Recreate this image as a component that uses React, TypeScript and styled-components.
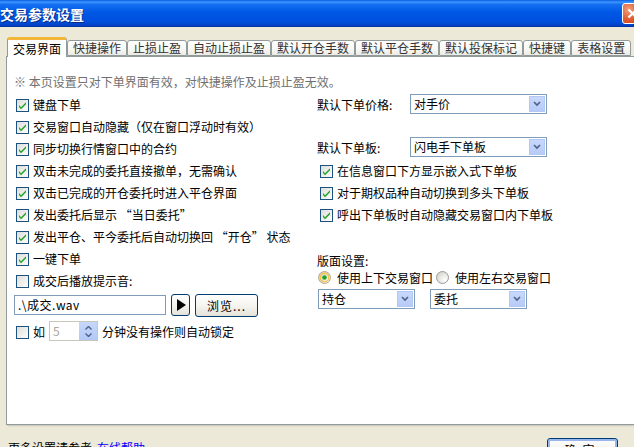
import styled, { createGlobalStyle } from "styled-components";

const GlobalStyle = createGlobalStyle`
  html, body {
    margin: 0;
    padding: 0;
    overflow: hidden;
    background: #ece9d8;
  }
  body {
    font-family: "Noto Sans CJK SC", "Liberation Sans", sans-serif;
    font-size: 12px;
    color: #000;
  }
`;

const Window = styled.div`
  width: 646px;
  height: 480px;
  background: #ece9d8;
  display: flex;
  flex-direction: column;
`;

const TitleBar = styled.div`
  height: 27px;
  flex: none;
  display: flex;
  align-items: center;
  justify-content: space-between;
  background: linear-gradient(
    to bottom,
    #0a5fe0 0%,
    #3d95ff 8%,
    #1470f0 16%,
    #0058e6 45%,
    #004fdd 80%,
    #0043c8 93%,
    #00309c 100%
  );
`;

const Title = styled.div`
  color: #fff;
  font-weight: bold;
  font-size: 14px;
  line-height: 16px;
  text-shadow: 1px 1px 0 #0b2a80;
`;

const CloseBtn = styled.div`
  width: 19px;
  height: 19px;
  margin-right: 3px;
  border: 1px solid #fff;
  border-radius: 3px;
  background: radial-gradient(circle at 30% 30%, #f0a080 0%, #e0582c 55%, #c8401c 100%);
  display: flex;
  align-items: center;
  justify-content: center;
`;

const Body = styled.div`
  padding-top: 10px;
  display: flex;
  flex-direction: column;
`;

const TabBar = styled.div`
  height: 19px;
  display: flex;
  align-items: flex-end;
  padding-left: 7px;
  position: relative;
  z-index: 1;
`;

const Tab = styled.div<{ $active?: boolean }>`
  box-sizing: border-box;
  height: ${(p) => (p.$active ? "20px" : "16px")};
  margin-bottom: ${(p) => (p.$active ? "-1px" : "0")};
  padding: 0 5px;
  display: flex;
  align-items: center;
  white-space: nowrap;
  color: ${(p) => (p.$active ? "#000" : "#333")};
  background: ${(p) =>
    p.$active ? "#fff" : "linear-gradient(to bottom, #ffffff 0%, #f7f7f4 60%, #eceae2 100%)"};
  border: 1px solid #919b9c;
  border-bottom: ${(p) => (p.$active ? "none" : "1px solid #919b9c")};
  border-top: ${(p) => (p.$active ? "3px solid #f4b638" : "1px solid #919b9c")};
  border-radius: 3px 3px 0 0;
  line-height: 14px;
`;

const Panel = styled.div`
  margin-left: 6px;
  width: 636px;
  height: 369px;
  box-sizing: border-box;
  background: #fff;
  border: 1px solid #919b9c;
  box-shadow: 1px 1px 0 #d0cdc0, 2px 2px 0 #e3e0d2;
  padding: 17px 0 0 7px;
`;

const Note = styled.div`
  height: 16px;
  line-height: 16px;
  color: #707070;
  margin-bottom: 3px;
`;

const Columns = styled.div`
  display: grid;
  grid-template-columns: 303px 1fr;
`;

const Column = styled.div`
  display: flex;
  flex-direction: column;
`;

const CheckRow = styled.label<{ $indent?: number }>`
  height: 22px;
  display: flex;
  align-items: center;
  gap: 4px;
  padding-left: ${(p) => p.$indent ?? 2}px;
  white-space: nowrap;
`;

const BoxWrap = styled.span`
  width: 13px;
  height: 13px;
  flex: none;
  display: block;
`;

function CheckBox({ checked }: { checked?: boolean }) {
  return (
    <BoxWrap>
      <svg width="13" height="13" viewBox="0 0 13 13">
        <defs>
          <linearGradient id="cbg" x1="0" y1="0" x2="1" y2="1">
            <stop offset="0" stopColor="#dcdcd7" />
            <stop offset="1" stopColor="#ffffff" />
          </linearGradient>
        </defs>
        <rect x="0.5" y="0.5" width="12" height="12" fill="url(#cbg)" stroke="#1c5180" />
        {checked && (
          <path d="M3 6 L5 8.2 L10 3.3 L10 5.3 L5 10.2 L3 8 Z" fill="#21a121" />
        )}
      </svg>
    </BoxWrap>
  );
}

const FieldRow = styled.div<{ $h?: number }>`
  height: ${(p) => p.$h ?? 22}px;
  display: flex;
  align-items: center;
  white-space: nowrap;
`;

const Label = styled.span<{ $w?: number }>`
  width: ${(p) => (p.$w ? `${p.$w}px` : "auto")};
  flex: none;
`;

const SelectBox = styled.div<{ $w: number }>`
  box-sizing: border-box;
  width: ${(p) => p.$w}px;
  height: 20px;
  border: 1px solid #7f9db9;
  background: #fff;
  display: flex;
  align-items: stretch;
`;

const SelectText = styled.span`
  flex: 1;
  padding-left: 3px;
  line-height: 18px;
`;

const DropBtn = styled.span`
  width: 16px;
  margin: 1px;
  background: linear-gradient(to bottom, #c8d8fc 0%, #b6cbf7 100%);
  border: 1px solid #b3c8f5;
  box-sizing: border-box;
  display: flex;
  align-items: center;
  justify-content: center;
`;

function Select({ w, value }: { w: number; value: string }) {
  return (
    <SelectBox $w={w}>
      <SelectText>{value}</SelectText>
      <DropBtn>
        <svg width="8" height="6" viewBox="0 0 8 6">
          <path d="M1 1 L4 4 L7 1" stroke="#4d6185" strokeWidth="1.6" fill="none" />
        </svg>
      </DropBtn>
    </SelectBox>
  );
}

const Spacer = styled.div<{ $h: number }>`
  height: ${(p) => p.$h}px;
  flex: none;
`;

const RadioRow = styled.div`
  height: 14px;
  display: flex;
  align-items: center;
  padding-left: 1px;
  white-space: nowrap;
`;

const RadioItem = styled.span`
  display: flex;
  align-items: center;
  gap: 6px;
  margin-right: 3px;
`;

function Radio({ checked }: { checked?: boolean }) {
  return (
    <svg width="13" height="13" viewBox="0 0 13 13">
      <defs>
        <radialGradient id="rbg" cx="0.7" cy="0.7" r="0.8">
          <stop offset="0" stopColor="#ffffff" />
          <stop offset="1" stopColor="#d4d4cc" />
        </radialGradient>
      </defs>
      <circle cx="6.5" cy="6.5" r="6" fill="url(#rbg)" stroke={checked ? "#b0a890" : "#9a9a9a"} />
      {checked && (
        <>
          <circle cx="6.5" cy="6.5" r="4.3" fill="none" stroke="#f5c04a" strokeWidth="1.4" />
          <circle cx="6.5" cy="6.5" r="2.3" fill="#21a121" />
        </>
      )}
    </svg>
  );
}

const SelectPair = styled.div`
  display: flex;
  gap: 15px;
  padding-left: 1px;
`;

const FileRow = styled.div`
  margin-top: 2px;
  display: flex;
  align-items: center;
  height: 24px;
`;

const TextInput = styled.div`
  box-sizing: border-box;
  width: 152px;
  height: 20px;
  border: 1px solid #7f9db9;
  background: #fff;
  padding-left: 3px;
  line-height: 18px;
  letter-spacing: 0.5px;
`;

const XpButton = styled.div<{ $w: number; $h: number }>`
  box-sizing: border-box;
  width: ${(p) => p.$w}px;
  height: ${(p) => p.$h}px;
  border: 1px solid #003c74;
  border-radius: 3px;
  background: linear-gradient(to bottom, #ffffff 0%, #f5f4ef 50%, #e4e2d8 100%);
  display: flex;
  align-items: center;
  justify-content: center;
  white-space: nowrap;
  margin-left: 5px;
  letter-spacing: 1px;
`;

const LockRow = styled.div`
  margin-top: 4px;
  height: 20px;
  display: flex;
  align-items: center;
  padding-left: 2px;
  white-space: nowrap;
`;

const LockWord = styled.span`
  margin-left: 4px;
`;

const Spinner = styled.div`
  box-sizing: border-box;
  width: 49px;
  height: 20px;
  border: 1px solid #c9c7ba;
  background: #fff;
  display: flex;
  margin-left: 4px;
  margin-right: 4px;
`;

const SpinValue = styled.span`
  flex: 1;
  color: #aca899;
  padding-left: 3px;
  line-height: 18px;
`;

const SpinBtns = styled.span`
  width: 18px;
  background: linear-gradient(to bottom, #c6d7fb, #b2c8f6);
  display: flex;
  flex-direction: column;
  align-items: center;
  justify-content: center;
  gap: 3px;
`;

const Footer = styled.div`
  margin-top: 13px;
  display: flex;
  align-items: flex-start;
  padding-left: 8px;
  height: 30px;
`;

const FooterText = styled.span`
  line-height: 14px;
  margin-top: 3px;
  width: 539px;
`;

const Link = styled.span`
  color: #0000ff;
  margin-left: 5px;
`;

const FooterButton = styled.div`
  box-sizing: border-box;
  width: 71px;
  height: 23px;
  border: 1px solid #003c74;
  border-radius: 3px;
  box-shadow: inset 0 0 0 2px #9ab6ee;
  background: linear-gradient(to bottom, #ffffff 0%, #f2f1ec 60%, #e3e1d7 100%);
  display: flex;
  align-items: center;
  justify-content: center;
  letter-spacing: 6px;
`;

const leftChecks: [string, boolean][] = [
  ["键盘下单", true],
  ["交易窗口自动隐藏（仅在窗口浮动时有效）", true],
  ["同步切换行情窗口中的合约", true],
  ["双击未完成的委托直接撤单，无需确认", true],
  ["双击已完成的开仓委托时进入平仓界面", true],
  ["发出委托后显示 “当日委托”", true],
  ["发出平仓、平今委托后自动切换回 “开仓” 状态", true],
  ["一键下单", true],
  ["成交后播放提示音:", false],
];

const rightChecks = [
  "在信息窗口下方显示嵌入式下单板",
  "对于期权品种自动切换到多头下单板",
  "呼出下单板时自动隐藏交易窗口内下单板",
];

const tabs = [
  "交易界面",
  "快捷操作",
  "止损止盈",
  "自动止损止盈",
  "默认开仓手数",
  "默认平仓手数",
  "默认投保标记",
  "快捷键",
  "表格设置",
];

export default function App() {
  return (
    <>
      <GlobalStyle />
      <Window>
        <TitleBar>
          <Title>交易参数设置</Title>
          <CloseBtn>
            <svg width="11" height="11" viewBox="0 0 11 11">
              <path d="M1.5 1.5 L9.5 9.5 M9.5 1.5 L1.5 9.5" stroke="#fff" strokeWidth="2.2" />
            </svg>
          </CloseBtn>
        </TitleBar>
        <Body>
          <TabBar>
            {tabs.map((t, i) => (
              <Tab key={t} $active={i === 0}>
                {t}
              </Tab>
            ))}
          </TabBar>
          <Panel>
            <Note>※ 本页设置只对下单界面有效，对快捷操作及止损止盈无效。</Note>
            <Columns>
              <Column>
                {leftChecks.map(([text, on]) => (
                  <CheckRow key={text}>
                    <CheckBox checked={on} />
                    {text}
                  </CheckRow>
                ))}
                <FileRow>
                  <TextInput>.\成交.wav</TextInput>
                  <XpButton $w={19} $h={22}>
                    <svg width="10" height="12" viewBox="0 0 10 12">
                      <path d="M1 0 L10 6 L1 12 Z" fill="#000" />
                    </svg>
                  </XpButton>
                  <XpButton $w={63} $h={23}>
                    浏览...
                  </XpButton>
                </FileRow>
                <LockRow>
                  <CheckBox />
                  <LockWord>如</LockWord>
                  <Spinner>
                    <SpinValue>5</SpinValue>
                    <SpinBtns>
                      <svg width="7" height="4" viewBox="0 0 7 4">
                        <path d="M0.5 3.5 L3.5 0.5 L6.5 3.5" stroke="#4d6185" strokeWidth="1.4" fill="none" />
                      </svg>
                      <svg width="7" height="4" viewBox="0 0 7 4">
                        <path d="M0.5 0.5 L3.5 3.5 L6.5 0.5" stroke="#4d6185" strokeWidth="1.4" fill="none" />
                      </svg>
                    </SpinBtns>
                  </Spinner>
                  分钟没有操作则自动锁定
                </LockRow>
              </Column>
              <Column>
                <FieldRow>
                  <Label $w={93}>默认下单价格:</Label>
                  <Select w={137} value="对手价" />
                </FieldRow>
                <Spacer $h={21} />
                <FieldRow>
                  <Label $w={93}>默认下单板:</Label>
                  <Select w={137} value="闪电手下单板" />
                </FieldRow>
                <Spacer $h={1} />
                {rightChecks.map((t) => (
                  <CheckRow key={t} $indent={3}>
                    <CheckBox checked />
                    {t}
                  </CheckRow>
                ))}
                <Spacer $h={25} />
                <FieldRow $h={20}>
                  <Label>版面设置:</Label>
                </FieldRow>
                <RadioRow>
                  <RadioItem>
                    <Radio checked />
                    使用上下交易窗口
                  </RadioItem>
                  <RadioItem>
                    <Radio />
                    使用左右交易窗口
                  </RadioItem>
                </RadioRow>
                <Spacer $h={5} />
                <SelectPair>
                  <Select w={97} value="持仓" />
                  <Select w={97} value="委托" />
                </SelectPair>
              </Column>
            </Columns>
          </Panel>
          <Footer>
            <FooterText>
              更多设置请参考<Link>在线帮助</Link>
            </FooterText>
            <FooterButton>确定</FooterButton>
          </Footer>
        </Body>
      </Window>
    </>
  );
}
